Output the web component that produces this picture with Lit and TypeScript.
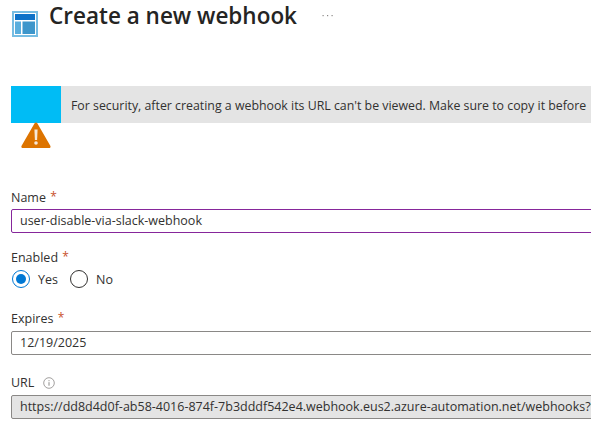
import {LitElement, html, css} from 'lit';
import {customElement} from 'lit/decorators.js';

@customElement('app-root')
class AppRoot extends LitElement {
  static styles = css`
    :host {
      display: block;
      width: 591px;
      height: 430px;
      overflow: hidden;
      background: #fff;
      color: #323130;
      font-family: 'Open Sans', 'Noto Sans', sans-serif;
      font-size: 12.5px;
    }
    .header {
      display: flex;
      align-items: flex-start;
      height: 86px;
      padding-left: 12px;
    }
    .blade-icon {
      margin-top: 11px;
      flex: none;
    }
    h1 {
      margin: -2px 0 0 11px;
      font-size: 22.5px;
      font-weight: 600;
      line-height: 36px;
      color: #252423;
      white-space: nowrap;
    }
    .more {
      margin: 2px 0 0 25px;
      flex: none;
    }
    .banner {
      position: relative;
      display: flex;
      align-items: center;
      height: 37px;
      margin-left: 11px;
      width: 580px;
      background: #e4e4e4;
      white-space: nowrap;
    }
    .banner-accent {
      flex: none;
      width: 50px;
      height: 100%;
      background: #00bcf5;
      margin-right: 10px;
    }
    .banner-text {
      font-size: 12.35px;
      padding-top: 1px;
    }
    .warn {
      position: absolute;
      left: 10px;
      top: 35px;
    }
    form {
      display: flex;
      flex-direction: column;
      padding: 66px 0 0 11px;
    }
    label {
      display: block;
      line-height: 18px;
      white-space: nowrap;
    }
    .req {
      color: #c8502c;
      font-size: 12px;
      margin-left: 1px;
      position: relative;
      top: -1px;
    }
    .box {
      width: 640px;
      height: 24px;
      box-sizing: border-box;
      margin-top: 3px;
      padding-left: 8px;
      border: 1px solid #8a8886;
      border-radius: 2px;
      line-height: 21px;
      white-space: nowrap;
      overflow: hidden;
    }
    .box.focus {
      margin-top: 2px;
      border-color: #86269b;
    }
    .box.disabled {
      background: #e4e4e4;
    }
    .enabled {
      margin-top: 16px;
    }
    .radios {
      display: flex;
      align-items: center;
      margin-top: 1px;
      height: 22px;
      padding-left: 1px;
    }
    .radio {
      display: flex;
      align-items: center;
      gap: 8px;
      margin-right: 12px;
    }
    .dot {
      display: flex;
      align-items: center;
      justify-content: center;
      width: 18px;
      height: 18px;
      box-sizing: border-box;
      border: 1px solid #323130;
      border-radius: 50%;
    }
    .dot.on {
      border-color: #0078d4;
    }
    .dot.on::after {
      content: '';
      width: 10px;
      height: 10px;
      border-radius: 50%;
      background: #0078d4;
    }
    .expires {
      margin-top: 20px;
    }
    .url {
      margin-top: 19px;
    }
    .url label {
      display: flex;
      align-items: center;
      gap: 9px;
    }
  `;

  render() {
    return html`
      <div class="header">
        <svg class="blade-icon" width="26" height="26" viewBox="0 0 26 26">
          <rect width="26" height="26" fill="#76bde3" />
          <rect x="2" y="2" width="22" height="22" fill="#fff" />
          <rect x="3" y="3" width="20" height="6" fill="#0e72c8" />
          <rect x="3" y="10.5" width="6" height="12.5" fill="#59aedd" />
          <rect x="10.5" y="10.5" width="12.5" height="12.5" fill="#3d96cb" />
        </svg>
        <h1>Create a new webhook</h1>
        <svg class="more" width="12" height="24" viewBox="0 0 12 24" fill="#8a8886">
          <rect x="0.5" y="13" width="1.2" height="1.2" />
          <rect x="5" y="13" width="1.2" height="1.2" />
          <rect x="9.5" y="13" width="1.2" height="1.2" />
        </svg>
      </div>
      <div class="banner">
        <div class="banner-accent"></div>
        <span class="banner-text">For security, after creating a webhook its URL can't be viewed. Make sure to copy it before</span>
        <svg class="warn" width="30" height="28" viewBox="0 0 30 28">
          <path
            d="M15 1.5c.6 0 1 .3 1.3.8l13 22.5c.6 1.1 0 2.2-1.2 2.2H1.9C.7 27-.1 25.900.6 24.800l13-22.500c.3-.5.800-.8 1.400-.8z"
            fill="#dd7400"
          />
          <path d="M13.400 8.500h3.200l-.5 10.500h-2.200z" fill="#f6e8d8" />
          <circle cx="15" cy="22" r="1.800" fill="#f6e8d8" />
        </svg>
      </div>
      <form>
        <label>Name <span class="req">*</span></label>
        <div class="box focus">user-disable-via-slack-webhook</div>
        <label class="enabled">Enabled <span class="req">*</span></label>
        <div class="radios">
          <div class="radio"><span class="dot on"></span>Yes</div>
          <div class="radio"><span class="dot"></span>No</div>
        </div>
        <label class="expires">Expires <span class="req">*</span></label>
        <div class="box">12/19/2025</div>
        <div class="url">
          <label>
            URL
            <svg width="12" height="12" viewBox="0 0 12 12" fill="none" stroke="#8a8886">
              <circle cx="6" cy="6" r="5.300" stroke-width="0.8" />
              <path d="M6 5.200v3.500M6 3.200v1" stroke-width="1" />
            </svg>
          </label>
          <div class="box disabled">https://dd8d4d0f-ab58-4016-874f-7b3dddf542e4.webhook.eus2.azure-automation.net/webhooks?token=abc</div>
        </div>
      </form>
    `;
  }
}
